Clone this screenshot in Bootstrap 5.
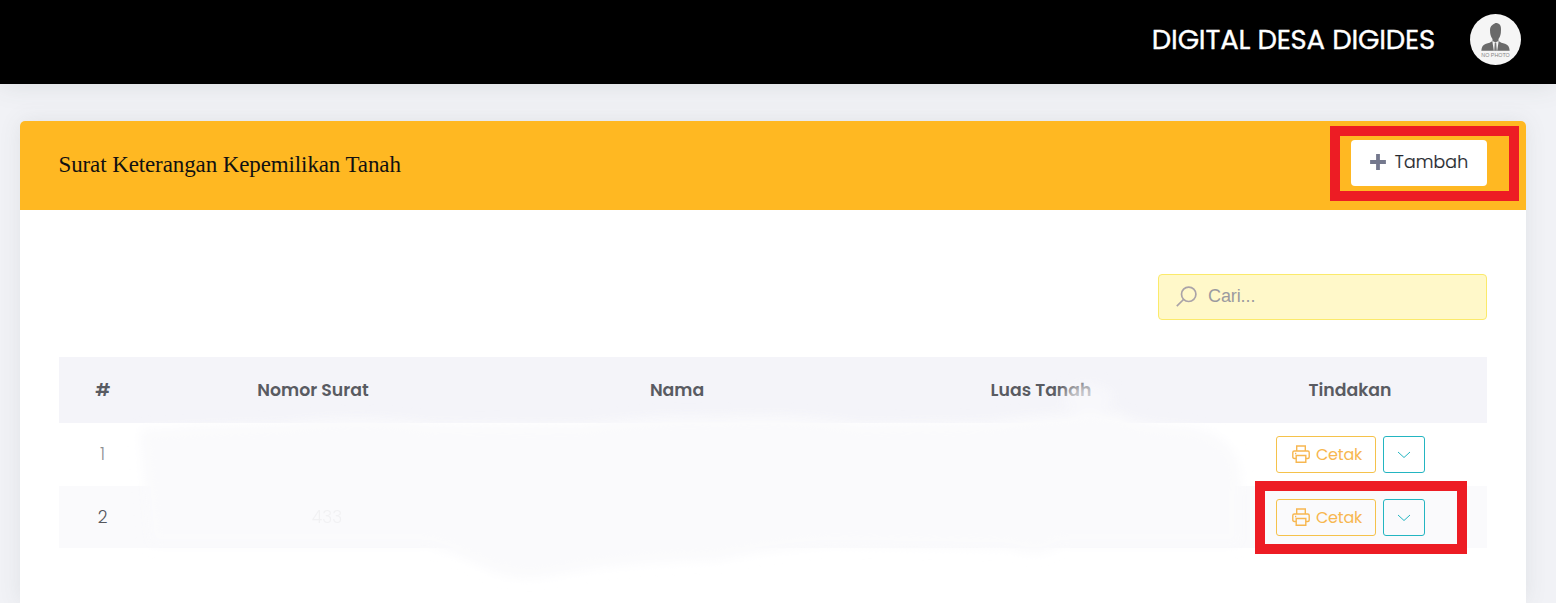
<!DOCTYPE html>
<html lang="id">
<head>
<meta charset="utf-8">
<title>Surat Keterangan Kepemilikan Tanah</title>
<meta name="viewport" content="width=device-width, initial-scale=1">
<link href="https://cdn.jsdelivr.net/npm/bootstrap@5.3.0/dist/css/bootstrap.min.css" rel="stylesheet">
<style>
body{background:#f1f2f6;font-family:Poppins,Inter,sans-serif;height:603px;overflow:hidden;color:#595d6e}
.topbar{height:84px;background:#000;padding-right:35px;padding-bottom:5px;gap:35px;box-shadow:0 0 26px rgba(70,85,80,.13)}
.brand-name{font-size:27.5px;letter-spacing:-.17px;color:#fff;line-height:1;white-space:nowrap;-webkit-text-stroke:.35px #fff}
.portlet{margin:37px 30px 0 20px;height:482px;border-radius:5px 5px 0 0;box-shadow:0 0 22px rgba(75,85,90,.1);background:#fff}
.portlet-head{height:89px;background:#ffb822;border-radius:5px 5px 0 0;padding:0 39px 0 38.5px}
.portlet-title{font:23px/1 "Liberation Serif",serif;color:#111;letter-spacing:-.11px;white-space:nowrap;margin-bottom:3px}
.btn-add{background:#fff;color:#25282e;width:136px;height:46px;border-radius:4px;font-size:17.3px;font-weight:300;margin-bottom:6px;padding:0 0 0;gap:9px;letter-spacing:.15px;-webkit-text-stroke:.2px #25282e}
.btn-add svg{margin-bottom:2px}
.portlet-body{padding:64px 39px 0}
.search{width:329px;height:46px;background:#fff8c9;border:1px solid #fbea6b;border-radius:4px;padding:0 17px 2px;gap:11px}
.search input{border:0;background:none;padding:0;outline:0;font:18px "Liberation Sans",sans-serif;letter-spacing:-.1px;width:240px}
.search input::placeholder{color:#9b9b9f;opacity:1}
.letters{margin-top:37px;table-layout:fixed;text-align:center;width:100%}
.letters th{height:66px;background:#f4f4f9;font-weight:600;font-size:17.3px;color:#595b62;padding:2px 0 0}
.letters td{height:63px;padding:0;font-size:17px;font-weight:300;color:#55565c}
.letters td:first-child{padding-left:1px}
.letters th:first-child{padding-left:2px}
.letters th:last-child,.letters td:last-child{padding-left:4px}
.letters .even td{background:#fafafc;height:62px}
.letters .even td:first-child{padding-top:2px}
.letters .even td:last-child{padding-top:1px}
.letters .dim{color:#8f9094}
.smudge{left:0;top:350px;pointer-events:none}
.act{height:37px;border:1px solid #f5c24b;border-radius:3px;padding:0;font-size:16px;font-weight:400;letter-spacing:-.2px;color:#f7b750;width:100px;gap:6px}
.act:not(.more){padding-left:3px}
.act:not(.more) svg{margin-bottom:1px}
.act.more{width:42px;border-color:#23b5c1;color:#23b5c1}
.marker{border:10px solid #ed1c24;pointer-events:none}
.marker-add{left:1330px;top:126px;width:189px;height:75px}
.marker-row{left:1255px;top:481px;width:212px;height:73px}
.actions{gap:7px}
.faint{position:relative;z-index:1;color:#f1f1f3;left:14px;top:1px}
</style>
</head>
<body class="position-relative">
<svg width="0" height="0" class="position-absolute">
  <symbol id="printer" viewBox="0 0 18 18"><g fill="none" stroke="currentColor" stroke-width="1.4"><path d="M4.700 6V1h8.600v5M4.200 13.500H2.300Q.8 13.500.8 12V7.500Q.8 6 2.300 6H15.700Q17.200 6 17.200 7.500V12Q17.200 13.500 15.700 13.500H13.800"/><path d="M4.200 10.500h9.600v6.700H4.200z"/><path d="M3 8.500h1.300"/></g></symbol>
  <symbol id="chev" viewBox="0 0 14 8"><path d="M1 1l6 5.500L13 1" fill="none" stroke="currentColor" stroke-width="1"/></symbol>
</svg>

<header class="topbar d-flex align-items-center justify-content-end">
  <span class="brand-name">DIGITAL DESA DIGIDES</span>
  <svg width="51" height="51" viewBox="0 0 51 51">
    <circle cx="25.500" cy="25.500" r="25.500" fill="#f5f5f5"/>
    <path d="M25.500 9C29.500 9 31.300 11.500 31 16Q31 22 28.500 25V27Q31 29 35 29.800Q39.300 31 39.700 36.800H11.300Q11.700 31 16 29.800Q20 29 22.500 27V25Q20 22 20 16Q19.700 11.500 25.500 9z" fill="#6a6a6a"/>
    <path d="M22.300 27l3.200 1.300 3.200-1.300-1.500 9.800h-3.400z" fill="#f5f5f5"/>
    <path d="M24.800 28.500h1.400l.6 8.300h-2.600z" fill="#777"/>
    <text x="11.300" y="42.500" textLength="28.500" lengthAdjust="spacingAndGlyphs" font-family="Liberation Sans" font-size="5.200" fill="#858585">NO PHOTO</text>
  </svg>
</header>

<main class="portlet">
  <div class="portlet-head d-flex align-items-center justify-content-between">
    <h1 class="portlet-title">Surat Keterangan Kepemilikan Tanah</h1>
    <button class="btn btn-add d-flex align-items-center justify-content-center">
      <svg width="16" height="16" viewBox="0 0 16 16"><path d="M8 2v12M2 8h12" stroke="#74788d" stroke-width="3.800" stroke-linecap="square"/></svg>
      <span>Tambah</span>
    </button>
  </div>
  <div class="portlet-body">
    <label class="search d-flex align-items-center ms-auto">
      <svg width="21" height="21" viewBox="0 0 21 21" fill="none" stroke="#aaa3a8" stroke-width="1.700"><circle cx="12.700" cy="8.300" r="7.200"/><path d="M7.500 13.500L.8 20.200"/></svg>
      <input type="text" placeholder="Cari...">
    </label>
    <table class="letters">
      <colgroup><col style="width:86px"><col style="width:336px"><col style="width:392px"><col style="width:336px"><col></colgroup>
      <thead><tr><th>#</th><th>Nomor Surat</th><th>Nama</th><th>Luas Tanah</th><th>Tindakan</th></tr></thead>
      <tbody>
        <tr><td class="dim">1</td><td></td><td></td><td></td><td>
          <div class="actions d-flex justify-content-center">
            <button class="btn act d-flex align-items-center justify-content-center"><svg width="18" height="18"><use href="#printer"/></svg><span>Cetak</span></button>
            <button class="btn act more d-flex align-items-center justify-content-center"><svg width="14" height="8"><use href="#chev"/></svg></button>
          </div></td></tr>
        <tr class="even"><td>2</td><td><span class="faint">433</span></td><td></td><td></td><td>
          <div class="actions d-flex justify-content-center">
            <button class="btn act d-flex align-items-center justify-content-center"><svg width="18" height="18"><use href="#printer"/></svg><span>Cetak</span></button>
            <button class="btn act more d-flex align-items-center justify-content-center"><svg width="14" height="8"><use href="#chev"/></svg></button>
          </div></td></tr>
      </tbody>
    </table>
  </div>
</main>

<!-- soft eraser strokes hiding the private cells -->
<svg class="smudge position-absolute" width="1556" height="253" viewBox="0 350 1556 253">
  <defs><filter id="soft" x="-5%" y="-20%" width="110%" height="140%"><feGaussianBlur stdDeviation="6"/></filter></defs>
  <g filter="url(#soft)" fill="#fafafc">
    <path d="M140 430Q210 425 280 424Q360 412 430 424L580 425Q650 414 720 417Q790 412 860 424L990 422Q1040 412 1120 412Q1130 424 1190 427Q1245 437 1240 490V545H1060Q1040 560 1010 548L830 545Q760 550 720 560Q620 562 560 574Q520 583 490 570Q460 555 430 545H150Z"/>
    <ellipse cx="1088" cy="398" rx="26" ry="15" opacity=".7"/>
  </g>
</svg>
<div class="marker marker-add position-absolute"></div>
<div class="marker marker-row position-absolute"></div>
<script src="https://cdn.jsdelivr.net/npm/bootstrap@5.3.0/dist/js/bootstrap.bundle.min.js"></script>
</body>
</html>
